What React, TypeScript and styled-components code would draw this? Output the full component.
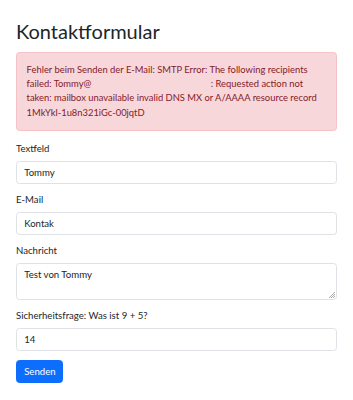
import React from "react";
import styled, { createGlobalStyle } from "styled-components";

const Global = createGlobalStyle`
  html, body { margin: 0; padding: 0; background: #fff; }
  body {
    font-family: Lato, "Noto Sans", "Liberation Sans", sans-serif;
    color: #212529;
    font-size: 9.6px;
    line-height: 1.5;
  }
  * { box-sizing: border-box; }
`;

const Page = styled.div`
  padding: 19px 16px 0 16px;
  width: 353px;
`;

const Title = styled.h1`
  margin: 0 0 9px 0;
  font-size: 20px;
  font-weight: 400;
  line-height: 1.2;
  color: #212529;
`;

const Alert = styled.div`
  background: #f8d7da;
  border: 1px solid #f5c2c7;
  color: #842029;
  border-radius: 3.5px;
  padding: 9.6px;
  margin-bottom: 11px;
  font-size: 9.4px;
  line-height: 14.4px;
  white-space: nowrap;
`;

const Redacted = styled.span`
  display: inline-block;
  width: 117px;
`;

const Group = styled.div`
  margin-bottom: 9.4px;
`;

const Label = styled.label`
  display: block;
  margin-bottom: 4.8px;
  line-height: 14.4px;
`;

const Field = styled.div<{ $h?: number }>`
  height: ${(p) => p.$h ?? 22.6}px;
  border: 1px solid #dee2e6;
  border-radius: 3.5px;
  background: #fff;
  padding: 3.6px 7.2px;
  line-height: 14.4px;
  position: relative;
`;

const Grip = styled.svg`
  position: absolute;
  right: 1px;
  bottom: 1px;
`;

const Button = styled.button`
  background: #0d6efd;
  color: #fff;
  border: 1px solid #0d6efd;
  border-radius: 3.5px;
  font-family: inherit;
  font-size: 9.6px;
  line-height: 14.4px;
  padding: 3.6px 7.2px;
  height: 22.4px;
  width: 47px;
`;

export default function App() {
  return (
    <>
      <Global />
      <Page>
        <Title>Kontaktformular</Title>
        <Alert>
          Fehler beim Senden der E-Mail: SMTP Error: The following recipients
          <br />
          failed: Tommy@<Redacted /> : Requested action not
          <br />
          taken: mailbox unavailable invalid DNS MX or A/AAAA resource record
          <br />
          1MkYkl-1u8n321iGc-00jqtD
        </Alert>
        <Group>
          <Label>Textfeld</Label>
          <Field>Tommy</Field>
        </Group>
        <Group>
          <Label>E-Mail</Label>
          <Field>Kontak</Field>
        </Group>
        <Group>
          <Label>Nachricht</Label>
          <Field $h={36.5}>
            Test von Tommy
            <Grip width="6" height="6" viewBox="0 0 6 6">
              <path d="M6 0 L0 6 M6 2 L2 6 M6 4 L4 6" stroke="#888" strokeWidth="0.7" />
            </Grip>
          </Field>
        </Group>
        <Group>
          <Label>Sicherheitsfrage: Was ist 9 + 5?</Label>
          <Field>14</Field>
        </Group>
        <Button>Senden</Button>
      </Page>
    </>
  );
}
